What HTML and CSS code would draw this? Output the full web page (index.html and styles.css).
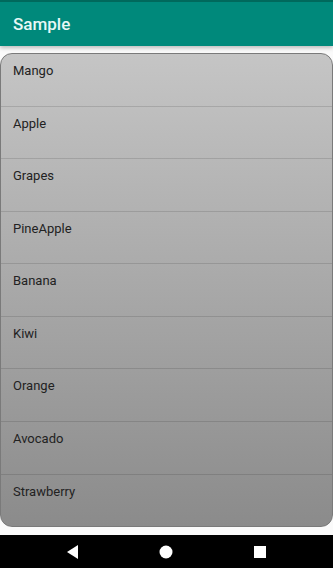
FILE: index.html
```html
<!DOCTYPE html>
<html lang="en">
<head>
  <meta charset="UTF-8" />
  <meta name="viewport" content="width=device-width, initial-scale=1.0"/>
  <title>Sample</title>
  <link rel="stylesheet" href="styles.css">
</head>
<body>
  <div class="screen">
    <header class="app-bar">
      <h1>Sample</h1>
    </header>

    <main class="content">
      <ul class="fruit-list">
        <li>Mango</li>
        <li>Apple</li>
        <li>Grapes</li>
        <li>PineApple</li>
        <li>Banana</li>
        <li>Kiwi</li>
        <li>Orange</li>
        <li>Avocado</li>
        <li>Strawberry</li>
      </ul>
    </main>

    <nav class="nav-bar">
      <svg class="nav-icon" width="14" height="14" viewBox="0 0 14 14"><polygon points="12,0 12,14 1,7" fill="#fff"/></svg>
      <svg class="nav-icon" width="14" height="14" viewBox="0 0 14 14"><circle cx="7" cy="7" r="6.5" fill="#fff"/></svg>
      <svg class="nav-icon" width="14" height="14" viewBox="0 0 14 14"><rect x="1" y="1" width="12" height="12" fill="#fff"/></svg>
    </nav>
  </div>
</body>
</html>
```

FILE: styles.css
```css
* {
  box-sizing: border-box;
}

body {
  margin: 0;
  font-family: Roboto, "Noto Sans", sans-serif;
  background: #fafafa;
}

.screen {
  width: 333px;
  height: 568px;
  display: flex;
  flex-direction: column;
}

.app-bar {
  height: 46px;
  background: #00897b;
  border-top: 2px solid #00695c;
  display: flex;
  align-items: center;
  padding: 0 13px;
  box-shadow: 0 2px 4px rgba(0,0,0,0.25);
  position: relative;
  z-index: 1;
}

.app-bar h1 {
  margin: 0;
  font-size: 17px;
  font-weight: 500;
  color: #e8f8f6;
}

.content {
  flex: 1;
  padding: 7px 0 8px;
}

.fruit-list {
  list-style: none;
  margin: 0;
  padding: 0;
  height: 474px;
  border: 1px solid #7a7a7a;
  border-radius: 12px;
  overflow: hidden;
  background: linear-gradient(to bottom, #c5c5c5, #8b8b8b);
  display: flex;
  flex-direction: column;
}

.fruit-list li {
  flex: 1;
  padding: 9px 12px 0;
  font-size: 13px;
  line-height: 16px;
  color: #222;
  border-bottom: 1px solid rgba(0,0,0,0.12);
}

.fruit-list li:last-child {
  border-bottom: none;
}

.nav-bar {
  height: 33px;
  background: #000;
  display: flex;
  align-items: center;
  justify-content: space-around;
  padding: 0 26px;
}
```
